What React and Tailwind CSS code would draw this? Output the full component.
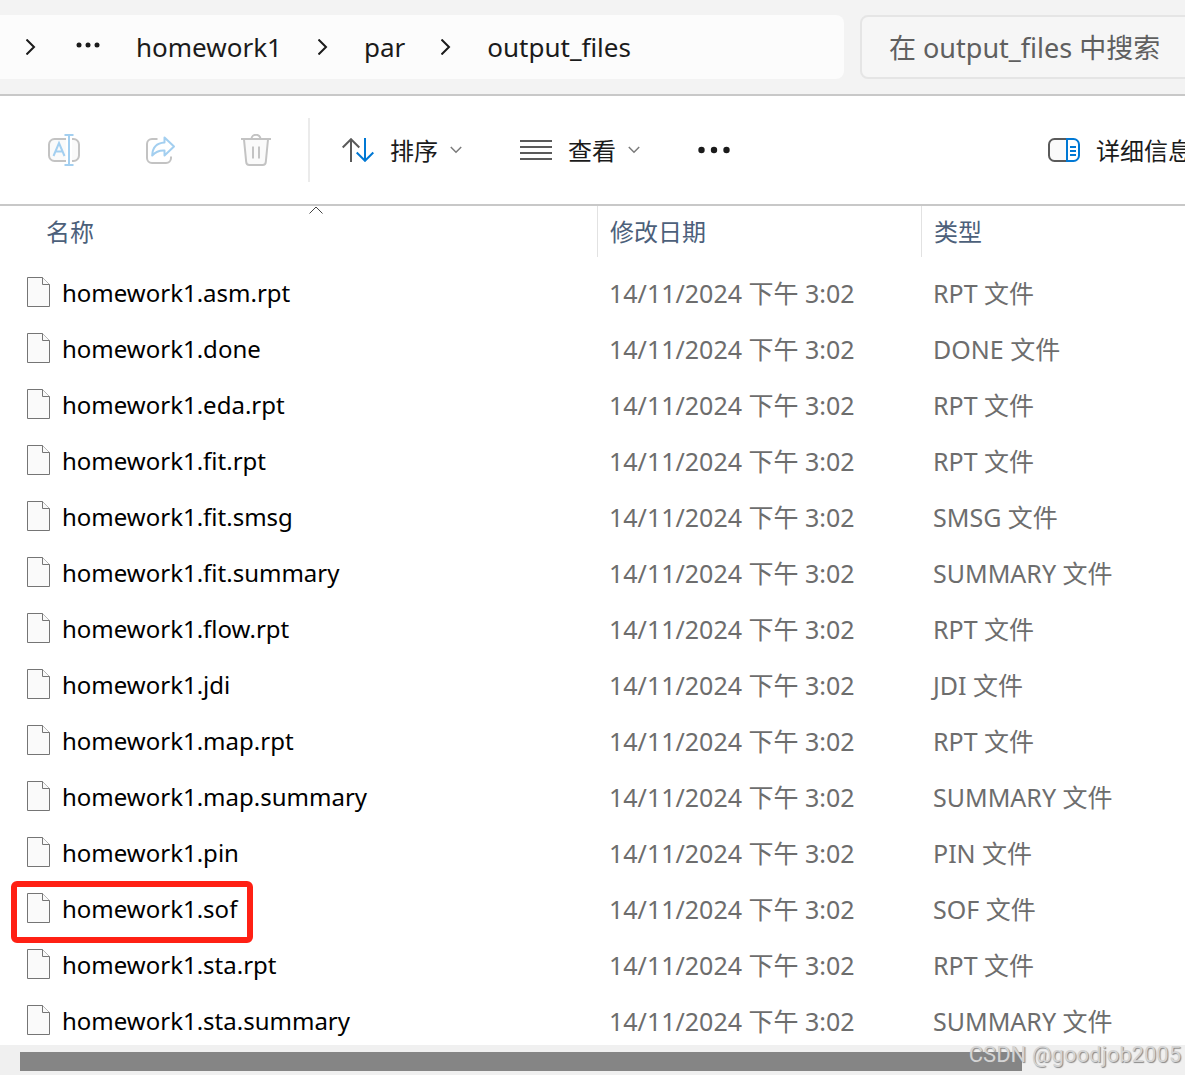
import { Fragment, useState } from "react";

const FILES = [
    { name: "homework1.asm.rpt", type: "RPT 文件" },
    { name: "homework1.done", type: "DONE 文件" },
    { name: "homework1.eda.rpt", type: "RPT 文件" },
    { name: "homework1.fit.rpt", type: "RPT 文件" },
    { name: "homework1.fit.smsg", type: "SMSG 文件" },
    { name: "homework1.fit.summary", type: "SUMMARY 文件" },
    { name: "homework1.flow.rpt", type: "RPT 文件" },
    { name: "homework1.jdi", type: "JDI 文件" },
    { name: "homework1.map.rpt", type: "RPT 文件" },
    { name: "homework1.map.summary", type: "SUMMARY 文件" },
    { name: "homework1.pin", type: "PIN 文件" },
    { name: "homework1.sof", type: "SOF 文件", marked: true },
    { name: "homework1.sta.rpt", type: "RPT 文件" },
    { name: "homework1.sta.summary", type: "SUMMARY 文件" },
];

const MODIFIED = "14/11/2024 下午 3:02";
const CRUMBS = ["homework1", "par", "output_files"];

const CrumbChevron = () => (
    <svg width="10" height="16" viewBox="0 0 10 16" fill="none" stroke="#1b1b1b" strokeWidth="2" className="shrink-0">
        <path d="M.5 .5 8 8 .5 15.5" />
    </svg>
);

const DownChevron = () => (
    <svg width="12" height="8" viewBox="0 0 12 8" fill="none" stroke="#7a7a7a" strokeWidth="1.5" className="shrink-0">
        <path d="M.8 1 6 6.2 11.2 1" />
    </svg>
);

const RenameIcon = () => (
    <svg width="32" height="32" viewBox="0 0 32 32" fill="none" strokeWidth="2">
        <path d="M18 5H6.500a5.500 5.500 0 0 0-5.500 5.500v11A5.500 5.500 0 0 0 6.500 27H18M24 5h1.500a5.500 5.500 0 0 1 5.500 5.500v11a5.500 5.500 0 0 1-5.500 5.500H24" stroke="#c3c3c3" fill="#fafafa" />
        <path d="M16.500 1h9M16.500 31h9M21 1v30M5.500 22 11 9l5.500 13M7.500 17.500h7" stroke="#a3cff0" />
    </svg>
);

const ShareIcon = () => (
    <svg width="32" height="32" viewBox="0 0 32 32" fill="none" strokeWidth="2">
        <path d="M13.500 5H8a5 5 0 0 0-5 5v14a5 5 0 0 0 5 5h14a5 5 0 0 0 5-5v-1.500" stroke="#c3c3c3" />
        <path d="M20.500 3.500 30 12.500l-9.500 9v-5c-5.500-.3-9 1.300-12.300 5C8.500 13.500 12.500 9 20.500 8.500z" stroke="#a3cff0" strokeLinejoin="round" />
    </svg>
);

const TrashIcon = () => (
    <svg width="32" height="32" viewBox="0 0 32 32" fill="none" stroke="#c3c3c3" strokeWidth="2">
        <path d="M4 5.500 6.200 28a3.200 3.200 0 0 0 3.200 3h13.200a3.200 3.200 0 0 0 3.200-3L28 5.500" fill="#fafafa" />
        <path d="M1 5h30M11.500 5a4.500 4.200 0 0 1 9 0M13 12.500v12M19 12.500v12" />
    </svg>
);

const SortIcon = () => (
    <svg width="32" height="24" viewBox="0 0 32 24" fill="none" strokeWidth="2">
        <path d="M9 24V1M.7 9.500 9 1.200l8.300 8.300" stroke="#5a5a5a" />
        <path d="M23 0v23M14.700 14.500 23 22.800l8.300-8.300" stroke="#0078d4" />
    </svg>
);

const LinesIcon = () => (
    <svg width="32" height="20" viewBox="0 0 32 20" stroke="#5a5a5a" strokeWidth="2">
        <path d="M0 1h32M0 7h32M0 13h32M0 19h32" />
    </svg>
);

const DetailsIcon = () => (
    <svg width="32" height="24" viewBox="0 0 32 24" fill="none" strokeWidth="2" className="shrink-0">
        <path d="M18 1H6.500A5.500 5.500 0 0 0 1 6.500v11A5.500 5.500 0 0 0 6.500 23H18" stroke="#5a5a5a" fill="#fafafa" />
        <path d="M19 1h6.500A5.500 5.500 0 0 1 31 6.500v11a5.500 5.500 0 0 1-5.500 5.500H19zM22 9h6M22 13h6M22 17h6" stroke="#0078d4" />
    </svg>
);

const FileIcon = () => (
    <svg width="23" height="30" viewBox="0 0 23 30" fill="#fafafa" stroke="#757575" className="mb-0.5 shrink-0">
        <path d="M.5.5h15l7 7v22H.5z" />
        <path d="M15.500.5V7.500H22.500" />
    </svg>
);

const App = () => {
    const [query, setQuery] = useState("");
    const [ascending, setAscending] = useState(true);

    const files = ascending ? FILES : [...FILES].reverse();

    return (
        <div className="relative flex h-screen flex-col overflow-hidden bg-white font-['Noto_Sans','Noto_Sans_CJK_SC',sans-serif] text-[24px] leading-8 text-[#1b1b1b]">
            {/* address bar + search */}
            <header className="flex shrink-0 gap-4 border-b-2 border-[#c8c8c8] bg-[#f3f3f3] py-[15px]">
                <nav className="flex h-16 min-w-0 flex-1 items-center gap-9 rounded-r-lg bg-[#fcfcfc] pl-[26px] text-[26px]">
                    <CrumbChevron />
                    <button aria-label="更多位置" className="mb-1 ml-1">
                        <svg width="24" height="6" viewBox="0 0 24 6" fill="#1b1b1b">
                            <circle cx="3" cy="3" r="2.500" />
                            <circle cx="12" cy="3" r="2.500" />
                            <circle cx="21" cy="3" r="2.500" />
                        </svg>
                    </button>
                    {CRUMBS.map((crumb, i) => (
                        <Fragment key={crumb}>
                            {i > 0 && <CrumbChevron />}
                            <a href="#">{crumb}</a>
                        </Fragment>
                    ))}
                </nav>
                <input
                    type="search"
                    aria-label="搜索"
                    placeholder="在 output_files 中搜索"
                    value={query}
                    onChange={(e) => setQuery(e.target.value)}
                    className="-mr-4 h-16 w-[341px] shrink-0 rounded-lg border-2 border-[#e5e5e5] bg-[#f6f6f6] pl-[27px] text-[27px] outline-none placeholder:text-[#5f5f5f]"
                />
            </header>

            {/* commands */}
            <div className="flex h-[110px] shrink-0 items-center border-b-2 border-[#c8c8c8] pl-12">
                <div className="flex gap-16">
                    <button aria-label="重命名" disabled><RenameIcon /></button>
                    <button aria-label="共享" disabled><ShareIcon /></button>
                    <button aria-label="删除" disabled><TrashIcon /></button>
                </div>
                <div className="ml-9 mr-8 h-16 w-0.5 bg-[#ebebeb]" />
                <div className="flex items-center gap-[58px]">
                    <button className="flex items-center" onClick={() => setAscending(!ascending)}>
                        <SortIcon />
                        <span className="ml-4 mr-3 pt-0.5">排序</span>
                        <DownChevron />
                    </button>
                    <button className="flex items-center">
                        <LinesIcon />
                        <span className="ml-4 mr-3 pt-0.5">查看</span>
                        <DownChevron />
                    </button>
                    <button aria-label="更多">
                        <svg width="32" height="8" viewBox="0 0 32 8" fill="#1b1b1b">
                            <circle cx="3.500" cy="4" r="3.200" />
                            <circle cx="16" cy="4" r="3.200" />
                            <circle cx="28.500" cy="4" r="3.200" />
                        </svg>
                    </button>
                </div>
                <button className="-mr-[7px] ml-auto flex items-center gap-4 whitespace-nowrap">
                    <DetailsIcon />
                    <span className="pt-0.5">详细信息</span>
                </button>
            </div>

            {/* file list */}
            <main className="min-h-0 flex-1 overflow-hidden">
                <table className="w-full table-fixed border-collapse text-left">
                    <thead className="text-[#4c607a]">
                        <tr>
                            <th className="w-[597px] p-0 pb-2 pl-[34px] font-normal">
                                <button className="flex h-[51px] w-full flex-col items-start px-3" onClick={() => setAscending(!ascending)}>
                                    <svg width="14" height="10" viewBox="0 0 14 10" fill="none" stroke="#444" className={ascending ? "self-center" : "rotate-180 self-center"}>
                                        <path d="M.5 7.500 7 1l6.500 6.500" />
                                    </svg>
                                    名称
                                </button>
                            </th>
                            <th className="w-[324px] p-0 pb-2 font-normal">
                                <div className="h-[51px] border-l border-[#e2e2e2] pl-3 pt-2.5">修改日期</div>
                            </th>
                            <th className="p-0 pb-2 font-normal">
                                <div className="h-[51px] border-l border-[#e2e2e2] pl-3 pt-2.5">类型</div>
                            </th>
                        </tr>
                    </thead>
                    <tbody className="text-[#6d6d6d]">
                        {files.map((file) => (
                            <tr key={file.name} className="h-14">
                                <td className="p-0 pl-[27px]">
                                    <div className="relative flex h-14 w-fit items-center gap-3 text-black">
                                        <FileIcon />
                                        {file.name}
                                        {file.marked && (
                                            <span className="absolute -bottom-1.5 -left-4 -right-4 top-0 rounded-md border-6 border-[#ff2014]" />
                                        )}
                                    </div>
                                </td>
                                <td className="p-0 pl-3 text-[25px]">{MODIFIED}</td>
                                <td className="p-0 pl-3 text-[25px]">{file.type}</td>
                            </tr>
                        ))}
                    </tbody>
                </table>
            </main>

            <div className="flex h-[30px] shrink-0 items-center bg-[#f0f0f0] pl-5 pt-0.5">
                <div className="h-[19px] w-[86%] bg-[#858585]" />
            </div>
            <p className="absolute bottom-1 right-1 font-['Roboto',sans-serif] text-[22px] text-[#d4d4d4] [text-shadow:1px_1px_1px_#888]">
                CSDN @goodjob2005
            </p>
        </div>
    );
};

export default App;
